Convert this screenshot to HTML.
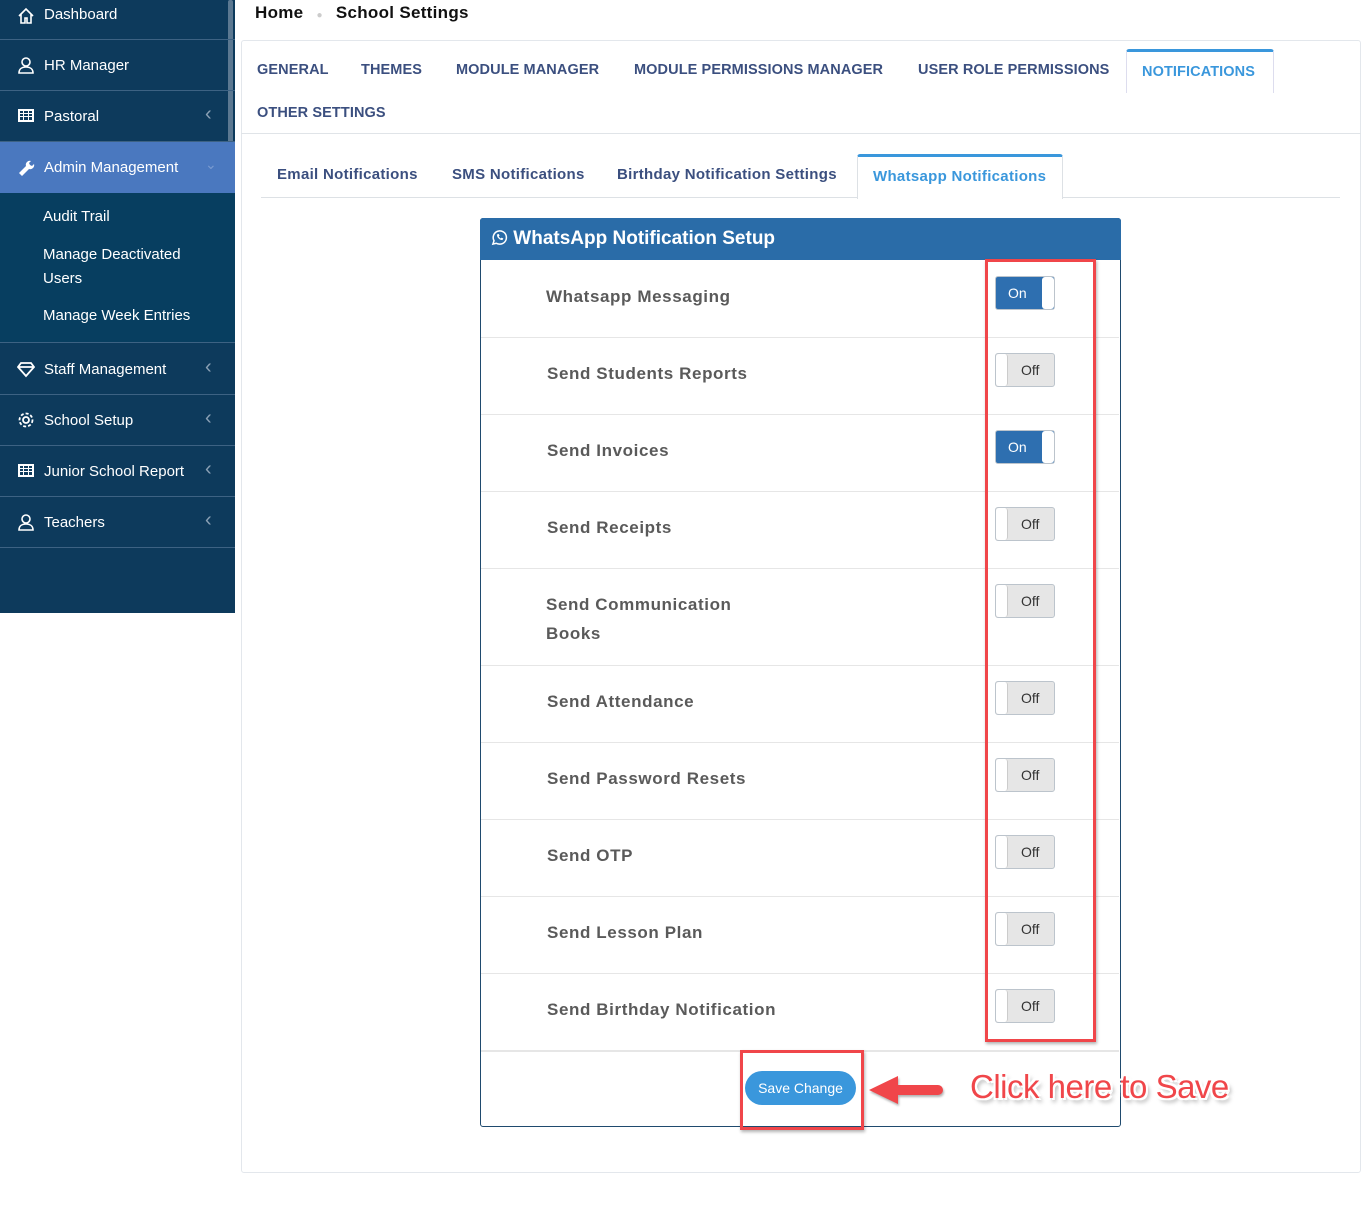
<!DOCTYPE html>
<html><head><meta charset="utf-8"><style>
*{box-sizing:border-box;margin:0;padding:0}
body{width:1364px;height:1206px;background:#fff;font-family:"Liberation Sans",sans-serif;position:relative;overflow:hidden}
.a{position:absolute}
.sb{left:0;top:0;width:235px;height:613px;background:#0d3a5c}
.it{position:absolute;left:0;width:235px;height:51px;border-bottom:1px solid #3d6283;color:#fff;font-size:15px;display:flex;align-items:center;padding-left:44px}
.it .ic{position:absolute;left:17px;top:16px;width:18px;height:18px}
.it .ch{position:absolute;left:205px;color:#8aa0b5;font-size:20px;top:12px}
.sub{position:absolute;left:43px;color:#fff;font-size:15px;line-height:24px}
.tab{position:absolute;color:#3b4f7f;font-size:14.5px;font-weight:bold;letter-spacing:.1px}
.stab{position:absolute;color:#3b4f7f;font-size:15px;font-weight:bold;letter-spacing:.3px}
.lbl{position:absolute;left:547px;color:#5a5a5a;font-size:17px;font-weight:bold;letter-spacing:.6px}
.row{position:absolute;left:481px;width:638px;height:1px;background:#e6e6e6}
.tg{position:absolute;left:995px;width:60px;height:34px;border:1px solid #bcc4cc;border-radius:3px;font-size:14px;overflow:hidden}
.on{background:#2e6fb0;color:#fff}
.on span{position:absolute;left:12px;top:8px}
.on i{position:absolute;right:0;top:0;width:12px;height:32px;background:#fff;border-radius:3px}
.off{background:#e6e6e6;color:#333}
.off span{position:absolute;left:25px;top:8px}
.off i{position:absolute;left:0;top:0;width:12px;height:32px;background:#fff;border-right:1px solid #ccc;border-radius:3px}
</style></head><body>
<div class="a sb">
 <div class="a" style="left:228px;top:0;width:5px;height:143px;background:#5b7891;border-radius:2px"></div>
 <div class="it" style="top:-11px;height:51px"><svg class="ic" style="top:18px" viewBox="0 0 18 18" fill="none" stroke="#fff" stroke-width="1.6"><path d="M2 9L9 2l7 7M4 7v9h4v-5h2v5h4V7"/></svg>Dashboard</div>
 <div class="it" style="top:40px"><svg class="ic" viewBox="0 0 18 18" fill="none" stroke="#fff" stroke-width="1.6"><circle cx="9" cy="6" r="4"/><path d="M2 17c0-4 3-6 7-6s7 2 7 6z"/></svg>HR Manager</div>
 <div class="it" style="top:91px"><svg class="ic" viewBox="0 0 18 18" fill="#fff"><path d="M1 2h16v13H1z M3 4v2h3V4z M7 4v2h4V4z M12 4v2h3V4z M3 7v2h3V7z M7 7v2h4V7z M12 7v2h3V7z M3 10v3h3v-3z M7 10v3h4v-3z M12 10v3h3v-3z" fill-rule="evenodd"/></svg>Pastoral<span class="ch">&lsaquo;</span></div>
 <div class="it" style="top:142px;background:#4a78bf;border-bottom:none"><svg class="ic" viewBox="0 0 18 18" fill="#fff"><path d="M2 15l7-7a4 4 0 015-5l-2 2 1 2 2 1 2-2a4 4 0 01-5 5l-7 7z"/></svg>Admin Management<span class="ch" style="color:#7a9bd0;font-size:14px;top:14px">&#8964;</span></div>
 <div class="a" style="top:193px;left:0;width:235px;height:150px;background:#073e60;border-bottom:1px solid #3d6283"></div>
 <div class="sub" style="top:205px">Audit Trail</div>
 <div class="sub" style="top:243px">Manage Deactivated<br>Users</div>
 <div class="sub" style="top:304px">Manage Week Entries</div>
 <div class="it" style="top:344px"><svg class="ic" viewBox="0 0 18 18" fill="none" stroke="#fff" stroke-width="1.8"><path d="M4 3h10l3 4-8 9-8-9zM1 7h16"/></svg>Staff Management<span class="ch">&lsaquo;</span></div>
 <div class="it" style="top:395px"><svg class="ic" viewBox="0 0 18 18" fill="none" stroke="#fff" stroke-width="1.8"><circle cx="9" cy="9" r="3"/><circle cx="9" cy="9" r="6.5" stroke-dasharray="3 2"/></svg>School Setup<span class="ch">&lsaquo;</span></div>
 <div class="it" style="top:446px"><svg class="ic" viewBox="0 0 18 18" fill="#fff"><path d="M1 2h16v13H1z M3 4v2h3V4z M7 4v2h4V4z M12 4v2h3V4z M3 7v2h3V7z M7 7v2h4V7z M12 7v2h3V7z M3 10v3h3v-3z M7 10v3h4v-3z M12 10v3h3v-3z" fill-rule="evenodd"/></svg>Junior School Report<span class="ch">&lsaquo;</span></div>
 <div class="it" style="top:497px"><svg class="ic" viewBox="0 0 18 18" fill="none" stroke="#fff" stroke-width="1.6"><circle cx="9" cy="6" r="4"/><path d="M2 17c0-4 3-6 7-6s7 2 7 6z"/></svg>Teachers<span class="ch">&lsaquo;</span></div>
</div>

<div class="a" style="left:255px;top:3px;font-size:17px;font-weight:bold;color:#111;letter-spacing:.3px">Home <span style="color:#ccc;font-size:10px;margin:0 8px">&#9679;</span> School Settings</div>

<div class="a" style="left:241px;top:40px;width:1120px;height:1133px;border:1px solid #e3e7ec;border-radius:3px"></div>
<div class="a" style="left:241px;top:133px;width:1120px;height:1px;background:#e0e4e8"></div>
<div class="tab" style="left:257px;top:62px">GENERAL</div>
<div class="tab" style="left:361px;top:62px">THEMES</div>
<div class="tab" style="left:456px;top:62px">MODULE MANAGER</div>
<div class="tab" style="left:634px;top:62px">MODULE PERMISSIONS MANAGER</div>
<div class="tab" style="left:918px;top:62px">USER ROLE PERMISSIONS</div>
<div class="a" style="left:1126px;top:49px;width:148px;height:44px;border:1px solid #dde;border-top:3px solid #3a97dc;border-bottom:none;border-radius:3px 3px 0 0"></div>
<div class="tab" style="left:1142px;top:64px;color:#3a97dc">NOTIFICATIONS</div>
<div class="tab" style="left:257px;top:105px">OTHER SETTINGS</div>

<div class="a" style="left:261px;top:197px;width:1079px;height:1px;background:#dde1e5"></div>
<div class="stab" style="left:277px;top:166px">Email Notifications</div>
<div class="stab" style="left:452px;top:166px">SMS Notifications</div>
<div class="stab" style="left:617px;top:166px">Birthday Notification Settings</div>
<div class="a" style="left:857px;top:154px;width:206px;height:45px;background:#fff;border:1px solid #dde1e5;border-top:3px solid #3a97dc;border-bottom:none;border-radius:3px 3px 0 0"></div>
<div class="stab" style="left:873px;top:168px;color:#3a97dc">Whatsapp Notifications</div>

<div class="a" style="left:480px;top:218px;width:641px;height:909px;border:1px solid #1f4a6e;border-radius:3px"></div>
<div class="a" style="left:480px;top:218px;width:641px;height:42px;background:#2a6ca8;border-radius:3px 3px 0 0;color:#fff;font-size:19px;font-weight:bold;padding:10px 0 0 11px">
<svg style="vertical-align:-2px" width="17" height="17" viewBox="0 0 18 18" fill="none" stroke="#fff" stroke-width="1.6"><path d="M2 16l1.2-3.6A7 7 0 119 16a7 7 0 01-3.4-.9z"/><path d="M6.5 6c0 3 2.5 5.5 5.5 5.5l.8-1.3-1.6-.8-.8.8c-1-.4-2-1.4-2.4-2.4l.8-.8-.8-1.6z" fill="#fff" stroke-width=".5"/></svg> WhatsApp Notification Setup</div>

<div class="row" style="top:337px"></div><div class="row" style="top:414px"></div><div class="row" style="top:491px"></div><div class="row" style="top:568px"></div><div class="row" style="top:665px"></div><div class="row" style="top:742px"></div><div class="row" style="top:819px"></div><div class="row" style="top:896px"></div><div class="row" style="top:973px"></div><div class="row" style="top:1050px;height:2px"></div>

<div class="lbl" style="left:546px;top:287px">Whatsapp Messaging</div>
<div class="lbl" style="top:364px">Send Students Reports</div>
<div class="lbl" style="top:441px">Send Invoices</div>
<div class="lbl" style="top:518px">Send Receipts</div>
<div class="lbl" style="top:590px;line-height:29px;left:546px">Send Communication<br>Books</div>
<div class="lbl" style="top:692px">Send Attendance</div>
<div class="lbl" style="top:769px">Send Password Resets</div>
<div class="lbl" style="top:846px">Send OTP</div>
<div class="lbl" style="top:923px">Send Lesson Plan</div>
<div class="lbl" style="top:1000px">Send Birthday Notification</div>

<div class="tg on" style="top:276px"><span>On</span><i></i></div>
<div class="tg off" style="top:353px"><i></i><span>Off</span></div>
<div class="tg on" style="top:430px"><span>On</span><i></i></div>
<div class="tg off" style="top:507px"><i></i><span>Off</span></div>
<div class="tg off" style="top:584px"><i></i><span>Off</span></div>
<div class="tg off" style="top:681px"><i></i><span>Off</span></div>
<div class="tg off" style="top:758px"><i></i><span>Off</span></div>
<div class="tg off" style="top:835px"><i></i><span>Off</span></div>
<div class="tg off" style="top:912px"><i></i><span>Off</span></div>
<div class="tg off" style="top:989px"><i></i><span>Off</span></div>

<div class="a" style="left:985px;top:259px;width:111px;height:783px;border:3px solid #f0464a;box-shadow:1px 2px 3px rgba(0,0,0,.3)"></div>

<div class="a" style="left:745px;top:1071px;width:111px;height:34px;background:#3a97dc;border-radius:17px;color:#fff;font-size:14px;text-align:center;line-height:34px">Save Change</div>
<div class="a" style="left:740px;top:1050px;width:124px;height:80px;border:3px solid #f0464a;box-shadow:1px 2px 3px rgba(0,0,0,.3)"></div>
<svg class="a" style="left:866px;top:1072px" width="80" height="36" viewBox="0 0 80 36"><path d="M3 18L32 4v9h40a5 5 0 010 10H32v9z" fill="#f0464a" style="filter:drop-shadow(1px 2px 1px rgba(0,0,0,.3))"/></svg>
<div class="a" style="left:970px;top:1068px;font-size:33px;color:#f0464a;letter-spacing:-.5px;text-shadow:-2px -2px 0 #fff,2px -2px 0 #fff,-2px 2px 0 #fff,2px 2px 0 #fff,3px 4px 4px rgba(0,0,0,.35)">Click here to Save</div>
</body></html>
